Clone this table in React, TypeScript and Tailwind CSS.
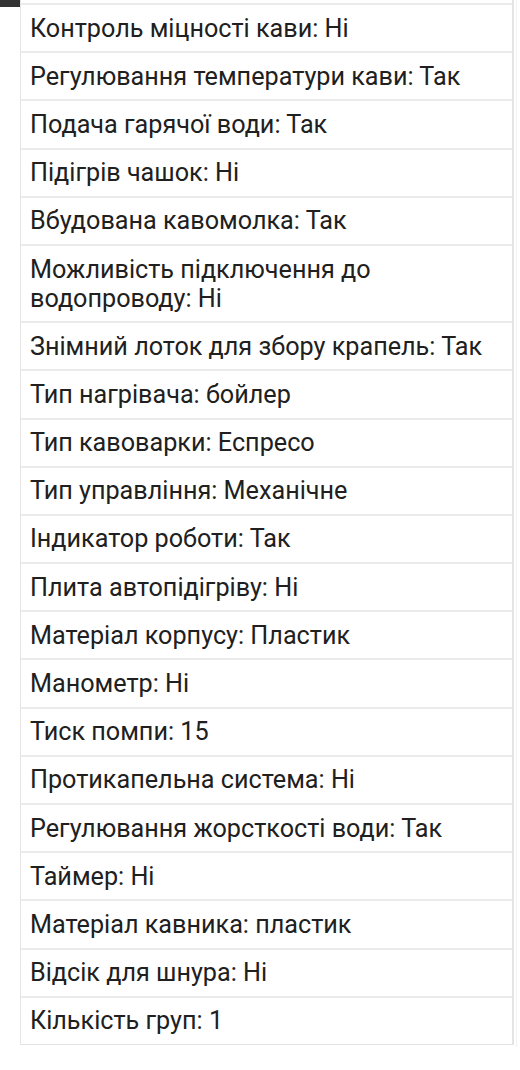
const specs = [
  "Контроль міцності кави: Ні",
  "Регулювання температури кави: Так",
  "Подача гарячої води: Так",
  "Підігрів чашок: Ні",
  "Вбудована кавомолка: Так",
  "Можливість підключення до водопроводу: Ні",
  "Знімний лоток для збору крапель: Так",
  "Тип нагрівача: бойлер",
  "Тип кавоварки: Еспресо",
  "Тип управління: Механічне",
  "Індикатор роботи: Так",
  "Плита автопідігріву: Ні",
  "Матеріал корпусу: Пластик",
  "Манометр: Ні",
  "Тиск помпи: 15",
  "Протикапельна система: Ні",
  "Регулювання жорсткості води: Так",
  "Таймер: Ні",
  "Матеріал кавника: пластик",
  "Відсік для шнура: Ні",
  "Кількість груп: 1",
];

export default function App() {
  return (
    <div className="w-[520px] h-[1070px] bg-white flex font-['Roboto',sans-serif]">
      {/* left gutter with the dark tab */}
      <div className="w-[20px] shrink-0">
        <div className="h-[7px] bg-[#333333]" />
      </div>

      <div className="w-[494px] self-start pt-[3px] border-l border-r-2 border-b border-[#e4e4e4]">
        <ul>
          {specs.map((s, i) => (
            <li
              key={i}
              className="border-t-2 border-[#ebebeb] pl-[9px] pr-3 py-[8.6px] text-[25.2px] leading-[29px] text-[#202020]"
            >
              {s}
            </li>
          ))}
        </ul>
      </div>

      {/* faint outer edge on the right */}
      <div className="ml-[2px] w-px h-[1047px] bg-[#f2f2f2]" />
    </div>
  );
}
